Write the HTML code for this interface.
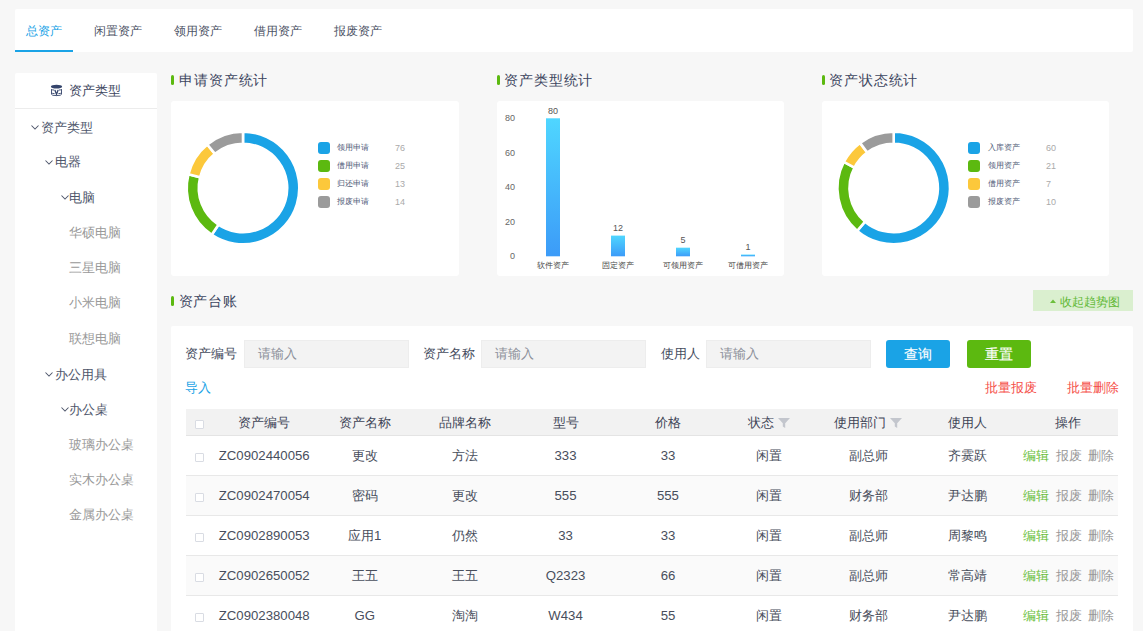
<!DOCTYPE html>
<html><head><meta charset="utf-8">
<style>
*{box-sizing:border-box;margin:0;padding:0}
html,body{width:1143px;height:631px;overflow:hidden;background:#f7f7f7;font-family:"Liberation Sans",sans-serif;color:#555}
.a{position:absolute;white-space:nowrap}
.card{position:absolute;background:#fff;border-radius:3px}
.t12{font-size:12px;line-height:16px}
.t13{font-size:13px;line-height:17px}
.t15{font-size:14px;line-height:19px;letter-spacing:0.9px}
.gbar{position:absolute;width:3px;height:10px;background:#5cb910;border-radius:1.5px}
.caret{position:absolute;width:8px;height:5px}
.leaf{color:#999}
.node{color:#4e566b}
.sq{position:absolute;width:12px;height:12px;border-radius:3px}
.lt{position:absolute;font-size:8px;line-height:10px;color:#4f5b78;white-space:nowrap}
.ln{position:absolute;font-size:9px;line-height:10px;color:#aaa}
.inp{position:absolute;height:28px;width:165px;background:#f3f3f3;border:1px solid #ededed}
.ph{position:absolute;color:#8c909a;font-size:13px;line-height:17px}
.btn{position:absolute;height:28px;width:64px;border-radius:3px;color:#fff;font-size:14px;line-height:28px;text-align:center;-webkit-text-stroke:0.15px #fff}
.row{position:absolute;left:186px;width:932px;height:40px;border-bottom:1px solid #e8e8e8}
.cell{position:absolute;top:0;height:40px;line-height:40px;text-align:center;font-size:13px;color:#555}
.cb{position:absolute;width:9px;height:9px;border:1px solid #d9dce3;background:#fff;border-radius:1px}
</style></head><body>

<!-- tabs -->
<div class="card" style="left:15px;top:9px;width:1118px;height:43px;border-radius:2px"></div>
<div class="a t12" style="left:26px;top:22.5px;color:#1aa3e6">总资产</div>
<div class="a" style="left:15px;top:50px;width:58px;height:2px;background:#1aa3e6"></div>
<div class="a t12" style="left:94px;top:22.5px;color:#4d5366">闲置资产</div>
<div class="a t12" style="left:174px;top:22.5px;color:#4d5366">领用资产</div>
<div class="a t12" style="left:254px;top:22.5px;color:#4d5366">借用资产</div>
<div class="a t12" style="left:334px;top:22.5px;color:#4d5366">报废资产</div>

<!-- sidebar -->
<div class="card" style="left:15px;top:73px;width:142px;height:600px;border-radius:2px"></div>
<div class="a" style="left:15px;top:108px;width:142px;height:1px;background:#ececec"></div>
<svg class="a" style="left:0;top:0" width="70" height="100" viewBox="0 0 70 100">
 <ellipse cx="56.5" cy="86.7" rx="5.6" ry="1.9" fill="#34446b"/>
 <path d="M51.5 89.2 V94.3 Q51.5 95.6 56.5 95.6 Q61.5 95.6 61.5 94.3 V89.2 M51.5 89.6 Q52.5 90 54.3 90.1 M58.7 90.1 Q60.5 90 61.5 89.6 M51.5 93.1 Q52.5 93.5 54.6 93.6 M58.4 93.6 Q60.5 93.5 61.5 93.1" stroke="#34446b" stroke-width="0.9" fill="none"/>
 <path d="M54.9 90 L56.5 94.4 L58.1 90" stroke="#34446b" stroke-width="1.3" fill="none"/>
</svg>
<div class="a t13 node" style="left:69px;top:82px;color:#3d4660">资产类型</div>

<svg class="caret" style="left:31px;top:125px" viewBox="0 0 8 5"><path d="M0.5 0.5 L4 4 L7.5 0.5" stroke="#4e566b" stroke-width="1.05" fill="none"/></svg>
<div class="a t13 node" style="left:40.5px;top:118.5px">资产类型</div>
<svg class="caret" style="left:45px;top:160px" viewBox="0 0 8 5"><path d="M0.5 0.5 L4 4 L7.5 0.5" stroke="#4e566b" stroke-width="1.05" fill="none"/></svg>
<div class="a t13 node" style="left:55px;top:153px">电器</div>
<svg class="caret" style="left:61px;top:195px" viewBox="0 0 8 5"><path d="M0.5 0.5 L4 4 L7.5 0.5" stroke="#4e566b" stroke-width="1.05" fill="none"/></svg>
<div class="a t13 node" style="left:69px;top:189px">电脑</div>
<div class="a t13 leaf" style="left:69px;top:224px">华硕电脑</div>
<div class="a t13 leaf" style="left:69px;top:259px">三星电脑</div>
<div class="a t13 leaf" style="left:69px;top:294px">小米电脑</div>
<div class="a t13 leaf" style="left:69px;top:330px">联想电脑</div>
<svg class="caret" style="left:45px;top:372px" viewBox="0 0 8 5"><path d="M0.5 0.5 L4 4 L7.5 0.5" stroke="#4e566b" stroke-width="1.05" fill="none"/></svg>
<div class="a t13 node" style="left:55px;top:366px">办公用具</div>
<svg class="caret" style="left:61px;top:407px" viewBox="0 0 8 5"><path d="M0.5 0.5 L4 4 L7.5 0.5" stroke="#4e566b" stroke-width="1.05" fill="none"/></svg>
<div class="a t13 node" style="left:69px;top:401px">办公桌</div>
<div class="a t13 leaf" style="left:69px;top:436px">玻璃办公桌</div>
<div class="a t13 leaf" style="left:69px;top:471px">实木办公桌</div>
<div class="a t13 leaf" style="left:69px;top:506px">金属办公桌</div>

<!-- chart titles -->
<div class="gbar" style="left:171px;top:75px"></div>
<div class="a t15" style="left:179px;top:71px;color:#3d4660">申请资产统计</div>
<div class="gbar" style="left:497px;top:75px"></div>
<div class="a t15" style="left:504px;top:71px;color:#3d4660">资产类型统计</div>
<div class="gbar" style="left:822px;top:75px"></div>
<div class="a t15" style="left:829px;top:71px;color:#3d4660">资产状态统计</div>

<!-- chart cards -->
<div class="card" style="left:171px;top:101px;width:288px;height:175px"></div>
<div class="card" style="left:497px;top:101px;width:287px;height:175px"></div>
<div class="card" style="left:822px;top:101px;width:287px;height:175px"></div>

<svg class="a" style="left:0;top:0" width="1143" height="300">
<path d="M243.00 131.70 A56.3 56.3 0 1 1 211.72 234.81 L218.44 224.75 A44.2 44.2 0 1 0 243.00 143.80Z" fill="#1aa3e6" stroke="#fff" stroke-width="2.6" stroke-linejoin="round"/><path d="M211.72 234.81 A56.3 56.3 0 0 1 188.39 174.32 L200.12 177.26 A44.2 44.2 0 0 0 218.44 224.75Z" fill="#5cb910" stroke="#fff" stroke-width="2.6" stroke-linejoin="round"/><path d="M188.39 174.32 A56.3 56.3 0 0 1 207.28 144.48 L214.96 153.83 A44.2 44.2 0 0 0 200.12 177.26Z" fill="#fcc83b" stroke="#fff" stroke-width="2.6" stroke-linejoin="round"/><path d="M207.28 144.48 A56.3 56.3 0 0 1 243.00 131.70 L243.00 143.80 A44.2 44.2 0 0 0 214.96 153.83Z" fill="#9b9b9b" stroke="#fff" stroke-width="2.6" stroke-linejoin="round"/>
<path d="M893.70 131.70 A56.3 56.3 0 1 1 857.20 230.87 L865.05 221.66 A44.2 44.2 0 1 0 893.70 143.80Z" fill="#1aa3e6" stroke="#fff" stroke-width="2.6" stroke-linejoin="round"/><path d="M857.20 230.87 A56.3 56.3 0 0 1 843.78 161.96 L854.51 167.56 A44.2 44.2 0 0 0 865.05 221.66Z" fill="#5cb910" stroke="#fff" stroke-width="2.6" stroke-linejoin="round"/><path d="M843.78 161.96 A56.3 56.3 0 0 1 860.03 142.88 L867.26 152.58 A44.2 44.2 0 0 0 854.51 167.56Z" fill="#fcc83b" stroke="#fff" stroke-width="2.6" stroke-linejoin="round"/><path d="M860.03 142.88 A56.3 56.3 0 0 1 893.70 131.70 L893.70 143.80 A44.2 44.2 0 0 0 867.26 152.58Z" fill="#9b9b9b" stroke="#fff" stroke-width="2.6" stroke-linejoin="round"/>
<defs><linearGradient id="bg" x1="0" y1="0" x2="0" y2="1"><stop offset="0" stop-color="#4fd6ff"/><stop offset="1" stop-color="#3c9bf8"/></linearGradient></defs>
<rect x="546" y="118.30" width="14" height="138.00" fill="url(#bg)"/>
<rect x="611" y="235.60" width="14" height="20.70" fill="url(#bg)"/>
<rect x="676" y="247.68" width="14" height="8.62" fill="url(#bg)"/>
<rect x="741" y="254.58" width="14" height="1.73" fill="url(#bg)"/>
</svg>
<div class="sq" style="left:318px;top:142px;background:#1aa3e6"></div><div class="lt" style="left:336.5px;top:143px">领用申请</div><div class="ln" style="left:395px;top:143px">76</div><div class="sq" style="left:318px;top:160px;background:#5cb910"></div><div class="lt" style="left:336.5px;top:161px">借用申请</div><div class="ln" style="left:395px;top:161px">25</div><div class="sq" style="left:318px;top:178px;background:#fcc83b"></div><div class="lt" style="left:336.5px;top:179px">归还申请</div><div class="ln" style="left:395px;top:179px">13</div><div class="sq" style="left:318px;top:196px;background:#9b9b9b"></div><div class="lt" style="left:336.5px;top:197px">报废申请</div><div class="ln" style="left:395px;top:197px">14</div>
<div class="sq" style="left:968px;top:142px;background:#1aa3e6"></div><div class="lt" style="left:987.5px;top:143px">入库资产</div><div class="ln" style="left:1046px;top:143px">60</div><div class="sq" style="left:968px;top:160px;background:#5cb910"></div><div class="lt" style="left:987.5px;top:161px">领用资产</div><div class="ln" style="left:1046px;top:161px">21</div><div class="sq" style="left:968px;top:178px;background:#fcc83b"></div><div class="lt" style="left:987.5px;top:179px">借用资产</div><div class="ln" style="left:1046px;top:179px">7</div><div class="sq" style="left:968px;top:196px;background:#9b9b9b"></div><div class="lt" style="left:987.5px;top:197px">报废资产</div><div class="ln" style="left:1046px;top:197px">10</div>
<div class="a" style="left:480px;width:35px;text-align:right;top:250.0px;font-size:9px;line-height:12px;color:#666">0</div>
<div class="a" style="left:480px;width:35px;text-align:right;top:215.5px;font-size:9px;line-height:12px;color:#666">20</div>
<div class="a" style="left:480px;width:35px;text-align:right;top:181.0px;font-size:9px;line-height:12px;color:#666">40</div>
<div class="a" style="left:480px;width:35px;text-align:right;top:146.5px;font-size:9px;line-height:12px;color:#666">60</div>
<div class="a" style="left:480px;width:35px;text-align:right;top:112.0px;font-size:9px;line-height:12px;color:#666">80</div>
<div class="a" style="left:513px;width:80px;text-align:center;top:104.8px;font-size:9px;line-height:12px;color:#555">80</div>
<div class="a" style="left:513px;width:80px;text-align:center;top:261px;font-size:8px;line-height:10px;color:#444">软件资产</div>
<div class="a" style="left:578px;width:80px;text-align:center;top:222.1px;font-size:9px;line-height:12px;color:#555">12</div>
<div class="a" style="left:578px;width:80px;text-align:center;top:261px;font-size:8px;line-height:10px;color:#444">固定资产</div>
<div class="a" style="left:643px;width:80px;text-align:center;top:234.2px;font-size:9px;line-height:12px;color:#555">5</div>
<div class="a" style="left:643px;width:80px;text-align:center;top:261px;font-size:8px;line-height:10px;color:#444">可领用资产</div>
<div class="a" style="left:708px;width:80px;text-align:center;top:241.1px;font-size:9px;line-height:12px;color:#555">1</div>
<div class="a" style="left:708px;width:80px;text-align:center;top:261px;font-size:8px;line-height:10px;color:#444">可借用资产</div>

<!-- table section -->
<div class="gbar" style="left:171px;top:296px"></div>
<div class="a t15" style="left:178.5px;top:291.5px;color:#3d4660">资产台账</div>
<div class="a" style="left:1033px;top:290px;width:100px;height:21px;background:#daefcf"></div>
<svg class="a" style="left:1050px;top:299px" width="6" height="4" viewBox="0 0 6 4"><path d="M0 4 L3 0.5 L6 4Z" fill="#6cbf3c"/></svg>
<div class="a t12" style="left:1060px;top:294px;color:#5fb833">收起趋势图</div>

<div class="card" style="left:171px;top:326px;width:962px;height:320px;border-radius:2px"></div>
<div class="a t13" style="left:185px;top:345px;color:#454c5e">资产编号</div>
<div class="inp" style="left:244px;top:340px"></div>
<div class="ph" style="left:258px;top:345px">请输入</div>
<div class="a t13" style="left:423px;top:345px;color:#454c5e">资产名称</div>
<div class="inp" style="left:481px;top:340px"></div>
<div class="ph" style="left:495px;top:345px">请输入</div>
<div class="a t13" style="left:661px;top:345px;color:#454c5e">使用人</div>
<div class="inp" style="left:706px;top:340px"></div>
<div class="ph" style="left:720px;top:345px">请输入</div>
<div class="btn" style="left:886px;top:340px;background:#1aa3e6">查询</div>
<div class="btn" style="left:967px;top:340px;background:#5cb910">重置</div>
<div class="a t13" style="left:185px;top:379px;color:#1aa3e6">导入</div>
<div class="a t13" style="left:985px;top:379px;color:#f5504a">批量报废</div>
<div class="a t13" style="left:1067px;top:379px;color:#f5504a">批量删除</div>

<div class="a" style="left:186px;top:409px;width:932px;height:27px;background:#f2f2f2;border-bottom:1px solid #e4e4e4"></div>
<div class="cb" style="left:195px;top:420px"></div>
<div class="a" style="left:214.00px;width:100.44px;top:410px;height:26px;line-height:26px;text-align:center;font-size:13px;color:#3e4456">资产编号</div>
<div class="a" style="left:314.44px;width:100.44px;top:410px;height:26px;line-height:26px;text-align:center;font-size:13px;color:#3e4456">资产名称</div>
<div class="a" style="left:414.88px;width:100.44px;top:410px;height:26px;line-height:26px;text-align:center;font-size:13px;color:#3e4456">品牌名称</div>
<div class="a" style="left:515.32px;width:100.44px;top:410px;height:26px;line-height:26px;text-align:center;font-size:13px;color:#3e4456">型号</div>
<div class="a" style="left:617.76px;width:100.44px;top:410px;height:26px;line-height:26px;text-align:center;font-size:13px;color:#3e4456">价格</div>
<div class="a" style="left:718.70px;width:100.44px;top:410px;height:26px;line-height:26px;text-align:center;font-size:13px;color:#3e4456">状态<svg width="12" height="10" viewBox="0 0 12 10" style="display:inline-block;vertical-align:middle;margin-left:4px;margin-top:-2px"><path d="M0 0 H12 L7.2 5.2 V10 L4.8 8.6 V5.2Z" fill="#c3c6cd"/></svg></div>
<div class="a" style="left:818.14px;width:100.44px;top:410px;height:26px;line-height:26px;text-align:center;font-size:13px;color:#3e4456">使用部门<svg width="12" height="10" viewBox="0 0 12 10" style="display:inline-block;vertical-align:middle;margin-left:4px;margin-top:-2px"><path d="M0 0 H12 L7.2 5.2 V10 L4.8 8.6 V5.2Z" fill="#c3c6cd"/></svg></div>
<div class="a" style="left:917.08px;width:100.44px;top:410px;height:26px;line-height:26px;text-align:center;font-size:13px;color:#3e4456">使用人</div>
<div class="a" style="left:1017.52px;width:100.44px;top:410px;height:26px;line-height:26px;text-align:center;font-size:13px;color:#3e4456">操作</div>
<div class="a" style="left:186px;top:436px;width:932px;height:40px;background:#fff;border-bottom:1px solid #e8e8e8"></div>
<div class="cb" style="left:195px;top:453px"></div>
<div class="a" style="left:214.00px;width:100.44px;top:435.5px;height:39px;line-height:39px;text-align:center;font-size:13.2px;color:#484e5c">ZC0902440056</div>
<div class="a" style="left:314.44px;width:100.44px;top:435.5px;height:39px;line-height:39px;text-align:center;font-size:13.2px;color:#484e5c">更改</div>
<div class="a" style="left:414.88px;width:100.44px;top:435.5px;height:39px;line-height:39px;text-align:center;font-size:13.2px;color:#484e5c">方法</div>
<div class="a" style="left:515.32px;width:100.44px;top:435.5px;height:39px;line-height:39px;text-align:center;font-size:13.2px;color:#484e5c">333</div>
<div class="a" style="left:617.76px;width:100.44px;top:435.5px;height:39px;line-height:39px;text-align:center;font-size:13.2px;color:#484e5c">33</div>
<div class="a" style="left:718.70px;width:100.44px;top:435.5px;height:39px;line-height:39px;text-align:center;font-size:13.2px;color:#484e5c">闲置</div>
<div class="a" style="left:818.14px;width:100.44px;top:435.5px;height:39px;line-height:39px;text-align:center;font-size:13.2px;color:#484e5c">副总师</div>
<div class="a" style="left:917.08px;width:100.44px;top:435.5px;height:39px;line-height:39px;text-align:center;font-size:13.2px;color:#484e5c">齐霙跃</div>
<div class="a" style="left:1018.52px;width:100.44px;top:436px;height:39px;line-height:39px;text-align:center;font-size:13px;color:#999"><span style="color:#6cbf3c">编辑</span><span style="margin-left:6.5px">报废</span><span style="margin-left:6.5px">删除</span></div>
<div class="a" style="left:186px;top:476px;width:932px;height:40px;background:#fafafa;border-bottom:1px solid #e8e8e8"></div>
<div class="cb" style="left:195px;top:493px"></div>
<div class="a" style="left:214.00px;width:100.44px;top:475.5px;height:39px;line-height:39px;text-align:center;font-size:13.2px;color:#484e5c">ZC0902470054</div>
<div class="a" style="left:314.44px;width:100.44px;top:475.5px;height:39px;line-height:39px;text-align:center;font-size:13.2px;color:#484e5c">密码</div>
<div class="a" style="left:414.88px;width:100.44px;top:475.5px;height:39px;line-height:39px;text-align:center;font-size:13.2px;color:#484e5c">更改</div>
<div class="a" style="left:515.32px;width:100.44px;top:475.5px;height:39px;line-height:39px;text-align:center;font-size:13.2px;color:#484e5c">555</div>
<div class="a" style="left:617.76px;width:100.44px;top:475.5px;height:39px;line-height:39px;text-align:center;font-size:13.2px;color:#484e5c">555</div>
<div class="a" style="left:718.70px;width:100.44px;top:475.5px;height:39px;line-height:39px;text-align:center;font-size:13.2px;color:#484e5c">闲置</div>
<div class="a" style="left:818.14px;width:100.44px;top:475.5px;height:39px;line-height:39px;text-align:center;font-size:13.2px;color:#484e5c">财务部</div>
<div class="a" style="left:917.08px;width:100.44px;top:475.5px;height:39px;line-height:39px;text-align:center;font-size:13.2px;color:#484e5c">尹达鹏</div>
<div class="a" style="left:1018.52px;width:100.44px;top:476px;height:39px;line-height:39px;text-align:center;font-size:13px;color:#999"><span style="color:#6cbf3c">编辑</span><span style="margin-left:6.5px">报废</span><span style="margin-left:6.5px">删除</span></div>
<div class="a" style="left:186px;top:516px;width:932px;height:40px;background:#fff;border-bottom:1px solid #e8e8e8"></div>
<div class="cb" style="left:195px;top:533px"></div>
<div class="a" style="left:214.00px;width:100.44px;top:515.5px;height:39px;line-height:39px;text-align:center;font-size:13.2px;color:#484e5c">ZC0902890053</div>
<div class="a" style="left:314.44px;width:100.44px;top:515.5px;height:39px;line-height:39px;text-align:center;font-size:13.2px;color:#484e5c">应用1</div>
<div class="a" style="left:414.88px;width:100.44px;top:515.5px;height:39px;line-height:39px;text-align:center;font-size:13.2px;color:#484e5c">仍然</div>
<div class="a" style="left:515.32px;width:100.44px;top:515.5px;height:39px;line-height:39px;text-align:center;font-size:13.2px;color:#484e5c">33</div>
<div class="a" style="left:617.76px;width:100.44px;top:515.5px;height:39px;line-height:39px;text-align:center;font-size:13.2px;color:#484e5c">33</div>
<div class="a" style="left:718.70px;width:100.44px;top:515.5px;height:39px;line-height:39px;text-align:center;font-size:13.2px;color:#484e5c">闲置</div>
<div class="a" style="left:818.14px;width:100.44px;top:515.5px;height:39px;line-height:39px;text-align:center;font-size:13.2px;color:#484e5c">副总师</div>
<div class="a" style="left:917.08px;width:100.44px;top:515.5px;height:39px;line-height:39px;text-align:center;font-size:13.2px;color:#484e5c">周黎鸣</div>
<div class="a" style="left:1018.52px;width:100.44px;top:516px;height:39px;line-height:39px;text-align:center;font-size:13px;color:#999"><span style="color:#6cbf3c">编辑</span><span style="margin-left:6.5px">报废</span><span style="margin-left:6.5px">删除</span></div>
<div class="a" style="left:186px;top:556px;width:932px;height:40px;background:#fafafa;border-bottom:1px solid #e8e8e8"></div>
<div class="cb" style="left:195px;top:573px"></div>
<div class="a" style="left:214.00px;width:100.44px;top:555.5px;height:39px;line-height:39px;text-align:center;font-size:13.2px;color:#484e5c">ZC0902650052</div>
<div class="a" style="left:314.44px;width:100.44px;top:555.5px;height:39px;line-height:39px;text-align:center;font-size:13.2px;color:#484e5c">王五</div>
<div class="a" style="left:414.88px;width:100.44px;top:555.5px;height:39px;line-height:39px;text-align:center;font-size:13.2px;color:#484e5c">王五</div>
<div class="a" style="left:515.32px;width:100.44px;top:555.5px;height:39px;line-height:39px;text-align:center;font-size:13.2px;color:#484e5c">Q2323</div>
<div class="a" style="left:617.76px;width:100.44px;top:555.5px;height:39px;line-height:39px;text-align:center;font-size:13.2px;color:#484e5c">66</div>
<div class="a" style="left:718.70px;width:100.44px;top:555.5px;height:39px;line-height:39px;text-align:center;font-size:13.2px;color:#484e5c">闲置</div>
<div class="a" style="left:818.14px;width:100.44px;top:555.5px;height:39px;line-height:39px;text-align:center;font-size:13.2px;color:#484e5c">副总师</div>
<div class="a" style="left:917.08px;width:100.44px;top:555.5px;height:39px;line-height:39px;text-align:center;font-size:13.2px;color:#484e5c">常高靖</div>
<div class="a" style="left:1018.52px;width:100.44px;top:556px;height:39px;line-height:39px;text-align:center;font-size:13px;color:#999"><span style="color:#6cbf3c">编辑</span><span style="margin-left:6.5px">报废</span><span style="margin-left:6.5px">删除</span></div>
<div class="a" style="left:186px;top:596px;width:932px;height:40px;background:#fff;border-bottom:1px solid #e8e8e8"></div>
<div class="cb" style="left:195px;top:613px"></div>
<div class="a" style="left:214.00px;width:100.44px;top:595.5px;height:39px;line-height:39px;text-align:center;font-size:13.2px;color:#484e5c">ZC0902380048</div>
<div class="a" style="left:314.44px;width:100.44px;top:595.5px;height:39px;line-height:39px;text-align:center;font-size:13.2px;color:#484e5c">GG</div>
<div class="a" style="left:414.88px;width:100.44px;top:595.5px;height:39px;line-height:39px;text-align:center;font-size:13.2px;color:#484e5c">淘淘</div>
<div class="a" style="left:515.32px;width:100.44px;top:595.5px;height:39px;line-height:39px;text-align:center;font-size:13.2px;color:#484e5c">W434</div>
<div class="a" style="left:617.76px;width:100.44px;top:595.5px;height:39px;line-height:39px;text-align:center;font-size:13.2px;color:#484e5c">55</div>
<div class="a" style="left:718.70px;width:100.44px;top:595.5px;height:39px;line-height:39px;text-align:center;font-size:13.2px;color:#484e5c">闲置</div>
<div class="a" style="left:818.14px;width:100.44px;top:595.5px;height:39px;line-height:39px;text-align:center;font-size:13.2px;color:#484e5c">财务部</div>
<div class="a" style="left:917.08px;width:100.44px;top:595.5px;height:39px;line-height:39px;text-align:center;font-size:13.2px;color:#484e5c">尹达鹏</div>
<div class="a" style="left:1018.52px;width:100.44px;top:596px;height:39px;line-height:39px;text-align:center;font-size:13px;color:#999"><span style="color:#6cbf3c">编辑</span><span style="margin-left:6.5px">报废</span><span style="margin-left:6.5px">删除</span></div>

</body></html>
